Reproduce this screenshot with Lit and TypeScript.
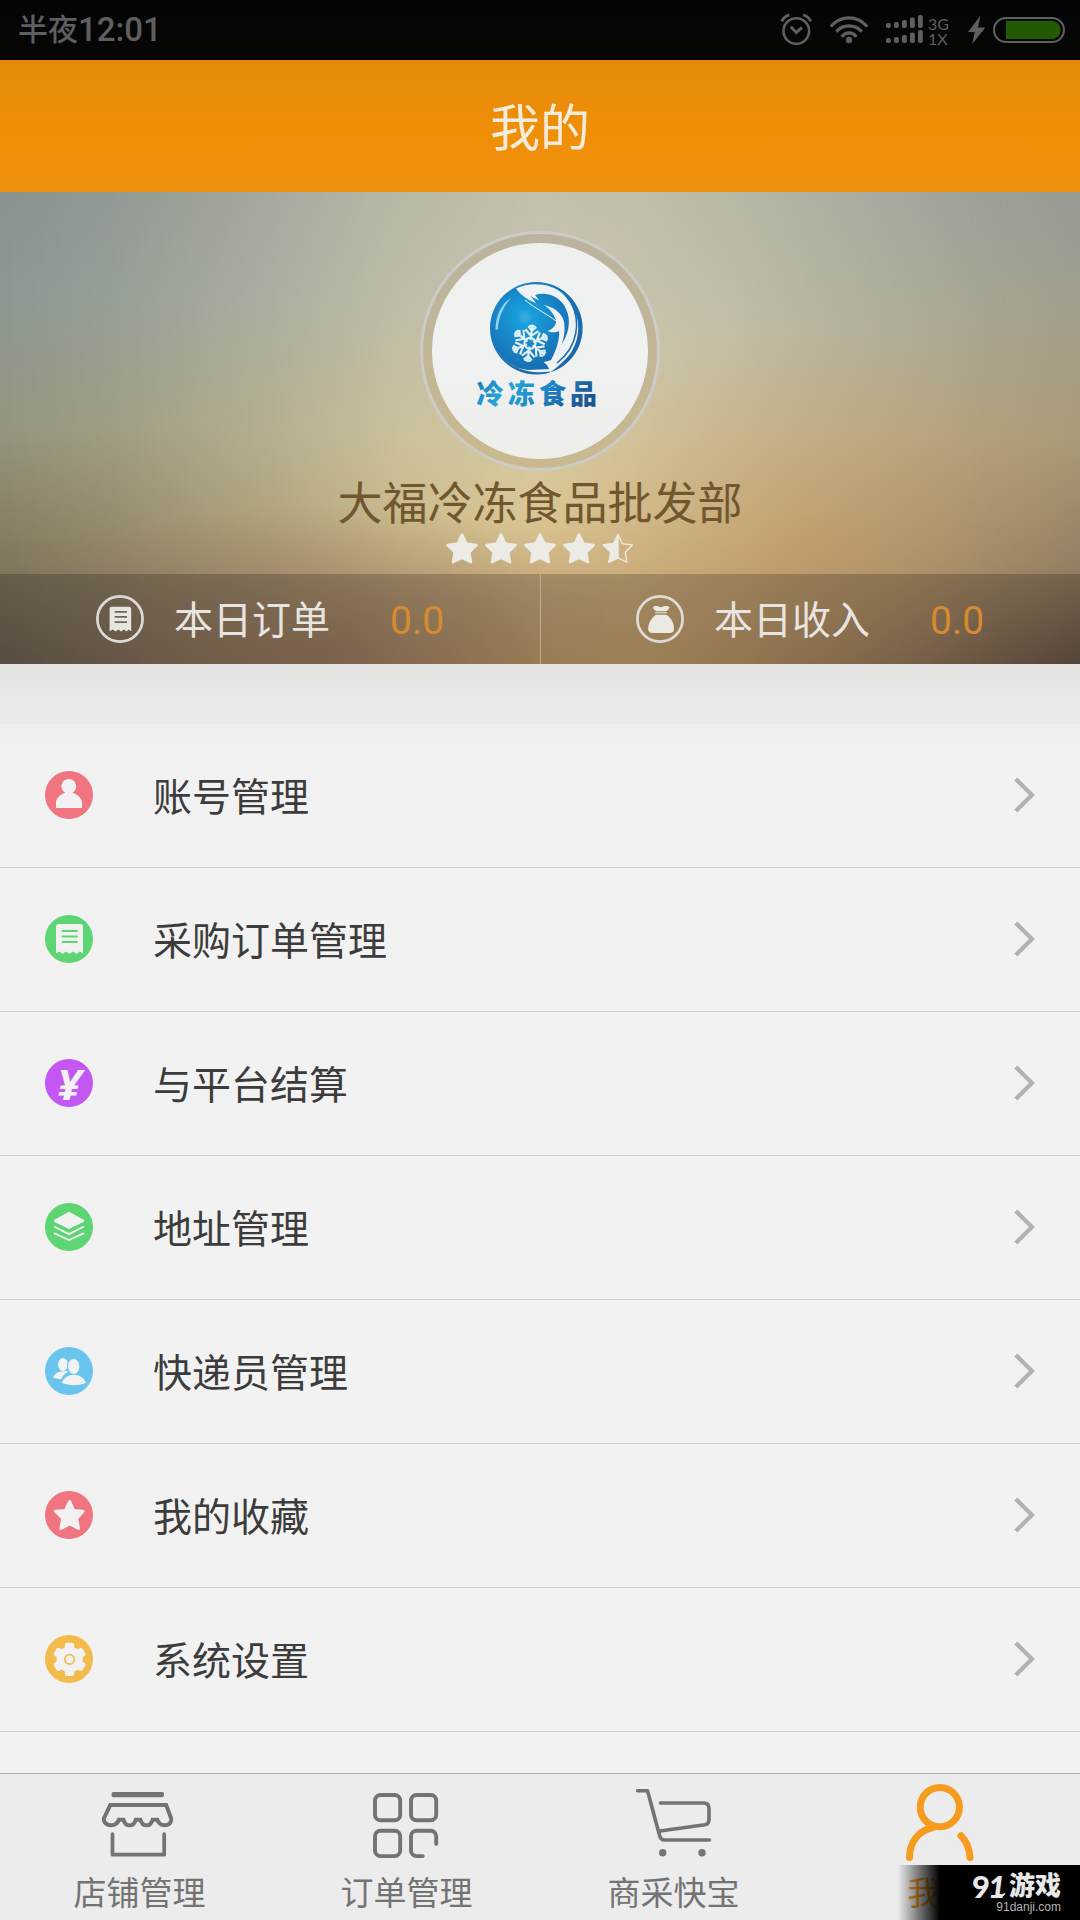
import { LitElement, html, css, svg } from "lit";
import { customElement, property } from "lit/decorators.js";

const receipt = (line: string) => svg`
  <path d="M13.5 9H35.5Q38 9 38 11.5V38.6L35 36.6L31.3 39L28 36.6L24.5 39L21 36.6L17.7 39L14 36.6L11 38.6V11.5Q11 9 13.5 9Z" fill="#f2f2f2"/>
  <path d="M17.5 16H32M17.5 21.5H32M17.5 27H32" stroke=${line} stroke-width="1.8" stroke-linecap="round"/>`;

const MENU = [
  {
    label: "账号管理", color: "#f17580",
    art: svg`<circle cx="23.8" cy="15.3" r="7.4" fill="#f2f2f2"/>
      <path d="M20.6 19.5H27V21.8C32 23 36 26.500 37 31V37H11V31C12 26.500 15.600 23 20.600 21.800Z" fill="#f2f2f2"/>`,
  },
  { label: "采购订单管理", color: "#5ed573", art: receipt("#5ed573") },
  {
    label: "与平台结算", color: "#c457f2",
    art: svg`<text class="yen" x="11.500" y="40.500" textLength="25" lengthAdjust="spacingAndGlyphs">¥</text>`,
  },
  {
    label: "地址管理", color: "#5ed573",
    art: svg`<path d="M24 8.700L39 17V18.800L24 25.900L9 18.800V17Z" fill="#f2f2f2"/>
      <path d="M9 23.500L24 31.200L39 23.500M9 30.100L24 37L39 30.100" fill="none" stroke="#f2f2f2" stroke-width="1.900"/>`,
  },
  {
    label: "快递员管理", color: "#69c4ee",
    art: svg`<ellipse cx="18" cy="17.400" rx="4.900" ry="6.500" fill="#f2f2f2"/>
      <path d="M8 30.500C10 26.500 14 23.500 22.500 24.200L22.500 25.600C19.500 26.800 17.500 29 16.400 32.200C13.500 31.900 10 31.500 8 30.500Z" fill="#f2f2f2"/>
      <ellipse cx="28.700" cy="19.400" rx="6.700" ry="8.300" fill="#69c4ee"/>
      <ellipse cx="28.700" cy="19.400" rx="5.700" ry="7.500" fill="#f2f2f2"/>
      <path d="M16.700 35.800C19 30.500 23.500 27.800 29 27.800C34.500 27.800 39 31 41 36C36.500 37.700 33 38.200 29 38.200C24.500 38.200 20.500 37.500 16.700 35.800Z" fill="#f2f2f2"/>`,
  },
  {
    label: "我的收藏", color: "#f17580",
    art: svg`<path d="M24.700 10.500L28.700 19.500L38 20.300L31.700 27.400L33.500 37.500L24.700 33L15.900 37.500L17.700 27.400L10.500 20.300L20.500 19.500Z" fill="#f2f2f2" stroke="#f2f2f2" stroke-width="3" stroke-linejoin="round"/>`,
  },
  {
    label: "系统设置", color: "#f3bb4b",
    art: svg`<g fill="#f2f2f2"><circle cx="24.600" cy="24.400" r="13"/>
      <rect x="20" y="7.800" width="9.200" height="33.200" rx="2"/>
      <rect x="20" y="7.800" width="9.200" height="33.200" rx="2" transform="rotate(60 24.600 24.400)"/>
      <rect x="20" y="7.800" width="9.200" height="33.200" rx="2" transform="rotate(-60 24.600 24.400)"/></g>
      <circle cx="24.600" cy="24.400" r="4.700" fill="none" stroke="#f3bb4b" stroke-width="1.700"/>`,
  },
];

const TABS = [
  {
    label: "店铺管理", active: false,
    art: svg`<rect x="17.600" y="11.900" width="52.300" height="5.300" rx="1.600" fill="currentColor" stroke="none"/>
      <path d="M16.300 25H72.200L77.200 38.500V40.500C75.500 46.500 66 47.500 63.300 39.700H58.600C56.500 47.200 48.500 47.200 46.400 39.700H41.800C39.700 47.200 31.500 47.200 29.400 39.700H24.900C22.500 47.500 12 46.500 9.900 40.500V38.500Z" stroke-width="4"/>
      <path d="M18.500 54V74.700H70.200V54" stroke-width="3.700" stroke-linecap="round" stroke-linejoin="round"/>`,
  },
  {
    label: "订单管理", active: false,
    art: svg`<g stroke-width="3.900" stroke-linecap="round"><rect x="14" y="15" width="25.200" height="25.300" rx="5.500"/>
      <rect x="50" y="15" width="25.200" height="25.300" rx="5.500"/>
      <rect x="14" y="50.800" width="25.200" height="25.300" rx="5.500"/>
      <path d="M75.200 63.800V56.300A5.500 5.500 0 0 0 69.700 50.800H55.500A5.500 5.500 0 0 0 50 56.300V70.600A5.500 5.500 0 0 0 55.500 76.100H61.800"/></g>`,
  },
  {
    label: "商采快宝", active: false,
    art: svg`<g stroke-width="3.600" stroke-linecap="round" stroke-linejoin="round"><path d="M9.600 10.700H19.500L31.600 55.500Q32.800 60 36.500 60H81.500"/>
      <path d="M32.500 23H75.500Q81 23 81 28.500V40Q81 44 77 44.700L32 51"/></g>
      <circle cx="34.700" cy="72.700" r="3.700" fill="currentColor" stroke="none"/><circle cx="74" cy="72.700" r="3.700" fill="currentColor" stroke="none"/>`,
  },
  {
    label: "我的", active: true,
    art: svg`<g stroke-width="7" stroke-linecap="round"><circle cx="44.800" cy="27.200" r="19.600"/>
      <path d="M14.500 77.500C14.500 62 23.500 50.500 38 47.500M66 55.700C71.500 61.500 74.500 69.500 75.100 77.500"/></g>`,
  },
];

@customElement("status-bar")
class StatusBar extends LitElement {
  static styles = css`
    :host {
      display: flex; align-items: center; height: 60px; box-sizing: border-box;
      padding: 0 15px 0 18px; background: linear-gradient(#020506, #080604);
      color: #5f5f5f; font-family: Roboto, "Noto Sans CJK SC", sans-serif;
    }
    svg { display: block; flex: none; }
    .time { flex: 1; display: flex; align-items: center; font-weight: 500; line-height: 60px; }
    .period { font-size: 30px; }
    .clock { font-size: 33px; }
    .wifi, .signal { margin-left: 17px; }
    .net { margin-left: 5px; width: 23px; font: 16px/15px Lato, sans-serif; padding-top: 1px; }
    .bolt { margin-left: 17px; }
    .battery { margin-left: 7px; }
  `;
  render() {
    const bars = [5, 6, 8, 10.5, 13];
    return html`
      <div class="time"><span class="period">半夜</span><span class="clock">12:01</span></div>
      <svg width="32" height="60" fill="none" stroke="#5f5f5f" stroke-width="2.600">
        <circle cx="16.300" cy="31" r="12.800"/>
        <path d="M1.800 21.500C2.800 18.500 5 16.300 9.400 14.800M30.800 21.500C29.800 18.500 27.600 16.300 23.200 14.800" stroke-width="2.800"/>
        <path d="M10.800 26.800L16.300 32.500L22 27.500" stroke-width="3"/>
      </svg>
      <svg class="wifi" width="40" height="60" fill="none" stroke="#5f5f5f" stroke-width="3.200">
        <path d="M1.700 26.500C12 15 28 15 38.200 26.500M7.300 31.700C14 24 26 24 32.800 31.700M12.700 36.700C17 31.700 23 31.700 27.500 36.700"/>
        <circle cx="20" cy="40" r="3.200" fill="#5f5f5f" stroke="none"/>
      </svg>
      <svg class="signal" width="37" height="60" fill="#5f5f5f">
        ${bars.map((h, i) => svg`<rect x=${i * 8} y=${28 - h} width="4.800" height=${h} rx="1.800"/><rect x=${i * 8} y=${43 - h} width="4.800" height=${h} rx="1.800"/>`)}
      </svg>
      <div class="net">3G<br>1X</div>
      <svg class="bolt" width="18" height="60" fill="#5f5f5f"><path d="M12.500 15.500L0 32H6.700L4.300 44L17.300 27.500H10Z"/></svg>
      <svg class="battery" width="72" height="60">
        <rect x="1" y="18" width="70" height="24" rx="12" fill="none" stroke="#5f5f5f" stroke-width="2"/>
        <path d="M13 20.700H58.500A9.200 9.200 0 0 1 58.500 39.100H13Z" fill="#235a05"/>
      </svg>`;
  }
}

@customElement("shop-logo")
class ShopLogo extends LitElement {
  static styles = css`
    :host { display: block; }
    svg { display: block; }
    .caption { font: 900 27px "Noto Sans CJK SC", sans-serif; letter-spacing: 4.200px; }
  `;
  render() {
    return html`<svg width="216" height="216" viewBox="0 0 216 216">
      <defs>
        <radialGradient id="ball" cx="0.380" cy="0.380" r="0.700">
          <stop offset="0" stop-color="#41aee4"/><stop offset="0.120" stop-color="#189fdb"/>
          <stop offset="0.550" stop-color="#177dc0"/><stop offset="1" stop-color="#1a64a6"/>
        </radialGradient>
        <linearGradient id="ink" x1="0" y1="0" x2="1" y2="0.300">
          <stop offset="0" stop-color="#1d78b4"/><stop offset="0.350" stop-color="#27a4d8"/>
          <stop offset="0.650" stop-color="#1d83c4"/><stop offset="1" stop-color="#1e568f"/>
        </linearGradient>
      </defs>
      <circle cx="104.300" cy="85.300" r="46.300" fill="url(#ball)"/>
      <g fill="#eff2f3">
        <path d="M84 45.500C98 38.500 120 40 131 51C141 61 146 74 144.500 90C142 108 131 121 118 129.500C117 124 115 121.500 111.500 119C122 117.500 127 112 128.500 103C136 93 140 78 134 66C129 54 115 48 103 52L107 57C101 55 98 53 97 51L104 60C95 57 88 51 84 45.500Z"/>
        <path d="M112 62C126 65 133 74 132.500 84C133 92 130 104 124 115L119 117C124 108 128 96 127 88C124 90 119 89.500 115.500 88C121 86 124.500 82 124 77C121 70 118 66 112 62Z"/>
        <path d="M58.500 91C63 111 77 125 96 127L118 126V128.500C96 132 66 124 58.500 91Z"/>
        <path d="M143 69C150 85 146 108 128 121C142 106 146 88 143 69Z"/>
      </g>
      <path d="M93 57C104 66 115 71 124 78" stroke="#eff2f3" stroke-width="1" fill="none"/>
      <path d="M63.500 87C63.500 73 69 61 79.500 54.500C71 64 66.500 74 66 86Z" fill="#8fd4f0"/>
      <path d="M140 61C148 78 147 103 125 120" stroke="#1b6bae" stroke-width="1.500" fill="none"/>
      <g stroke="#e3f1f6" stroke-width="2.200" fill="none">
        ${[8, 68, 128, 188, 248, 308].map(a => svg`<path transform="rotate(${a} 98 100.300)" d="M98 97V81.500M94 83.500L98 87.500L102 83.500M91.500 87L98 93L104.500 87M95 83H101"/>`)}
        <circle cx="98" cy="100.300" r="5.500"/>
      </g>
      <text class="caption" x="44.500" y="161" fill="url(#ink)">冷冻食品</text>
    </svg>`;
  }
}

@customElement("stat-cell")
class StatCell extends LitElement {
  @property() label = "";
  @property() value = "";
  @property() kind = "";
  static styles = css`
    :host {
      flex: 1; display: flex; align-items: center; padding-left: 96px; height: 90px;
      font-family: Roboto, "Noto Sans CJK SC", sans-serif; font-size: 39px; line-height: 48px;
    }
    svg { flex: none; }
    .label { margin-left: 30px; width: 156px; color: #e8e5e1; white-space: nowrap; padding-top: 4px; }
    .value { margin-left: 60px; color: #d88a30; padding-top: 3px; }
  `;
  render() {
    const art = this.kind === "orders"
      ? svg`<path d="M15.800 11.700H33Q35.200 11.700 35.200 14V36.300L32.500 34.500L30.500 36.500L27.800 34.500L25 36.500L22.300 34.500L19.500 36.500L17 34.500L13.600 36.300V14Q13.600 11.700 15.800 11.700Z" fill="#e8e5e1"/>
          <path d="M18.700 16.900H31M18.700 21.900H31M18.700 27.200H31" stroke="#6f6355" stroke-width="1.700"/>`
      : svg`<path d="M17 12.500C19 10 22 11.500 24.800 12.300C28 11.500 31 10 33.500 12.500C33 15 30.500 15.500 30 16.200H20.500C20 15.500 17.500 15 17 12.500Z" fill="#ece9e3"/>
          <path d="M19 17.800H31" stroke="#ece9e3" stroke-width="1"/>
          <path d="M20 19.800H30.500C35 23 38 28 38 33.500Q38 38 33.500 38H16.600Q12.200 38 12.200 33.500C12.200 28 15.500 23 20 19.800Z" fill="#ece9e3"/>`;
    return html`<svg width="48" height="48"><circle cx="24" cy="24" r="22.600" fill="none" stroke="#dedbd7" stroke-width="2.700"/>${art}</svg>
      <span class="label">${this.label}</span><span class="value">${this.value}</span>`;
  }
}

@customElement("star-rating")
class StarRating extends LitElement {
  static styles = css`:host { display: flex; justify-content: center; gap: 7px; } svg { display: block; }`;
  render() {
    const d = "M16 1.500L20.300 10.600L30.500 12L23.200 19.200L25 29.200L16 24.800L7 29.200L8.800 19.200L1.500 12L11.700 10.600Z";
    const half = "M16 1.500L11.700 10.600L1.500 12L8.800 19.200L7 29.200L16 24.800Z";
    return [0, 1, 2, 3, 4].map(i => html`<svg width="32" height="31">
      <path d=${d} fill=${i < 4 ? "#edebe5" : "none"} stroke="#edebe5" stroke-width=${i < 4 ? 2.6 : 1.3} stroke-linejoin="round"/>
      ${i === 4 ? svg`<path d=${half} fill="#edebe5" stroke="#edebe5" stroke-width="1.500" stroke-linejoin="round"/>` : ""}
    </svg>`);
  }
}

@customElement("app-root")
class AppRoot extends LitElement {
  static styles = css`
    :host {
      display: flex; flex-direction: column; position: relative; width: 1080px; height: 1920px; overflow: hidden;
      background: #f2f2f2; font-family: Roboto, "Noto Sans CJK SC", sans-serif;
    }
    svg { display: block; flex: none; overflow: visible; }
    .header {
      height: 132px; display: flex; align-items: center; justify-content: center; box-sizing: border-box;
      background: linear-gradient(#e48a0a, #f08f07 55%, #f0910f);
      color: #f3ebdc; font-size: 50px; line-height: 60px; padding-top: 6px;
    }
    .hero {
      position: relative; height: 472px; display: flex; flex-direction: column; align-items: center;
      background: linear-gradient(#88928e, #8c9892 22%, #95957f 50%, #857b60 75%, #6d6154);
    }
    .hero::before, .hero::after, .glow { content: ""; position: absolute; inset: 0; }
    .hero::before {
      background: linear-gradient(#969b94, #a29f8d 25%, #ab9a78 52%, #8f7d62 80%, #6a574a);
      -webkit-mask-image: linear-gradient(90deg, transparent 40%, #000 95%);
    }
    .hero::after {
      background: linear-gradient(#c3c0ac, #cac5ae 25%, #d6caa2 52%, #dac896 68%, #cdb07e 86%, #cba570);
      -webkit-mask-image: linear-gradient(90deg, transparent, rgba(0,0,0,.16) 10%, rgba(0,0,0,.5) 25%, rgba(0,0,0,.82) 37%, #000 50%, rgba(0,0,0,.96) 58%, rgba(0,0,0,.8) 68%, rgba(0,0,0,.48) 80%, rgba(0,0,0,.15) 92%, transparent);
    }
    .hero > * { z-index: 1; }
    .hero > .glow {
      background:
        radial-gradient(ellipse 300px 210px at 810px 350px, rgba(196,146,94,.5), transparent),
        radial-gradient(ellipse 330px 150px at 330px 460px, rgba(140,105,90,.5), transparent);
    }
    .avatar {
      margin-top: 39px; box-sizing: border-box; width: 240px; height: 240px; border-radius: 50%;
      border: 3px solid #cdcbc7; padding: 9px; background: linear-gradient(#bbb39e, #c9b98f);
    }
    .photo { width: 216px; height: 216px; border-radius: 50%; background: linear-gradient(#efefef, #f0f2f2 40%, #eeeeeb); }
    .shop { margin-top: 5px; height: 58px; font-size: 45px; line-height: 58px; color: #70572f; white-space: nowrap; }
    .rating { margin-top: -1px; }
    .stats {
      margin-top: auto; align-self: stretch; display: flex; height: 90px; background: rgba(0,0,0,.2);
    }
    .rule { width: 1px; margin-right: -1px; background: #c9aa80; }
    .spacer { height: 60px; background: linear-gradient(#e3e2e1, #e8e8e7 50%, #eaeae9); }
    .menu { flex: 1; background: linear-gradient(#efefef, #f2f2f2 60px); }
    .row {
      box-sizing: border-box; height: 144px; padding: 0 45px 1px; display: flex; align-items: center;
      border-bottom: 1px solid #cfcfcf; color: #3c3c3c; font-size: 39px; line-height: 48px;
    }
    .row span { flex: 1; margin-left: 60px; padding-top: 5px; }
    .yen { font: italic 700 41px "Open Sans", sans-serif; fill: #f2f2f2; }
    .tabs {
      box-sizing: border-box; height: 147px; border-top: 1px solid #b0aeac; background: #ececec;
      display: flex; padding: 0 6px;
    }
    .tab {
      width: 267px; display: flex; flex-direction: column; align-items: center; padding-top: 6px;
      color: #737373; font-size: 33px; line-height: 40px; gap: 10px;
    }
    .tab svg { margin-right: 2px; }
    .tab.active { color: #f59b1e; }
    .mark {
      position: absolute; right: 0; bottom: 0; width: 182px; height: 55px; box-sizing: border-box;
      background: linear-gradient(90deg, transparent, #000 42px); padding: 8px 19px 0 0;
      display: flex; flex-direction: column; align-items: flex-end; color: #e8e8e8;
    }
    .brand { display: flex; align-items: center; height: 26px; font-weight: 900; font-size: 26px; line-height: 26px; }
    .nine { font: 900 31px/26px Lato, sans-serif; letter-spacing: -2px; }
    .nine i { display: inline-block; margin-right: 2px; }
    .swash { margin: 14px 3px 0 -11px; }
    .site { font: 12px/14px "Liberation Sans", sans-serif; color: #b4b4b4; margin-top: 1px; }
  `;
  render() {
    return html`
      <status-bar></status-bar>
      <div class="header">我的</div>
      <div class="hero">
        <div class="glow"></div>
        <div class="avatar"><div class="photo"><shop-logo></shop-logo></div></div>
        <div class="shop">大福冷冻食品批发部</div>
        <star-rating class="rating"></star-rating>
        <div class="stats">
          <stat-cell kind="orders" label="本日订单" value="0.0"></stat-cell>
          <div class="rule"></div>
          <stat-cell kind="income" label="本日收入" value="0.0"></stat-cell>
        </div>
      </div>
      <div class="spacer"></div>
      <div class="menu">
        ${MENU.map(m => html`<div class="row">
          <svg width="48" height="48"><circle cx="24" cy="24" r="24" fill=${m.color}/>${m.art}</svg>
          <span>${m.label}</span>
          <svg width="21" height="36" fill="none" stroke="#b2b2b2" stroke-width="4.200"><path d="M1.800 2L18 18L1.800 34"/></svg>
        </div>`)}
      </div>
      <div class="tabs">
        ${TABS.map(t => html`<div class="tab ${t.active ? "active" : ""}">
          <svg width="90" height="84" fill="none" stroke="currentColor">${t.art}</svg>
          <div>${t.label}</div>
        </div>`)}
      </div>
      <div class="mark">
        <div class="brand">
          <span class="nine">9<i>1</i></span>
          <svg class="swash" width="11" height="8"><path d="M0 7.500C2 5 3 4.500 5 5C7.500 5.500 9 4.500 10.500 3.500C10 6.500 8 7.800 5 7.800Z" fill="#e8e8e8"/></svg>游戏</div>
        <div class="site">91danji.com</div>
      </div>`;
  }
}
